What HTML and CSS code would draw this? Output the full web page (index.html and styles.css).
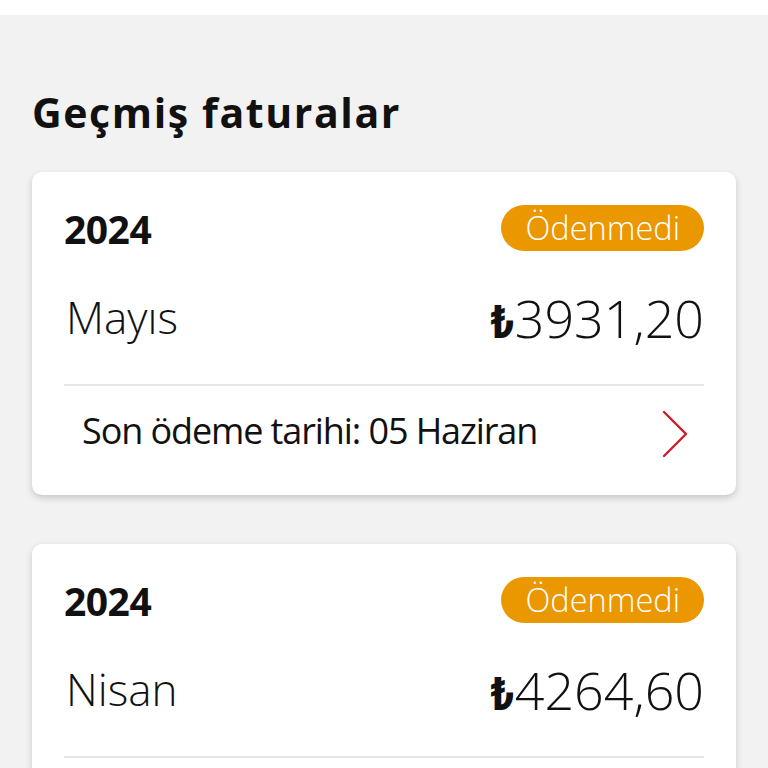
FILE: index.html
```html
<!DOCTYPE html>
<html lang="tr">
<head>
<meta charset="utf-8">
<title>Geçmiş faturalar</title>
<link rel="stylesheet" href="styles.css">
</head>
<body>
<div class="topbar"></div>
<main class="page">
  <h1 class="title">Geçmiş faturalar</h1>
  <section class="card">
    <div class="row head">
      <span class="year">2024</span>
      <span class="badge">Ödenmedi</span>
    </div>
    <div class="row amount-row">
      <span class="month">Mayıs</span>
      <span class="amount"><b class="lira">₺</b>3931,20</span>
    </div>
    <div class="divider"></div>
    <div class="row due">
      <span class="due-text">Son ödeme tarihi: 05 Haziran</span>
      <svg class="chev" width="30" height="48" viewBox="0 0 30 48"><path d="M4 2 L26 24 L4 46" fill="none" stroke="#d11a2a" stroke-width="2.4" stroke-linecap="round" stroke-linejoin="round"/></svg>
    </div>
  </section>
  <section class="card">
    <div class="row head">
      <span class="year">2024</span>
      <span class="badge">Ödenmedi</span>
    </div>
    <div class="row amount-row">
      <span class="month">Nisan</span>
      <span class="amount"><b class="lira">₺</b>4264,60</span>
    </div>
    <div class="divider"></div>
    <div class="row due">
      <span class="due-text">Son ödeme tarihi: 05 Mayıs</span>
      <svg class="chev" width="30" height="48" viewBox="0 0 30 48"><path d="M4 2 L26 24 L4 46" fill="none" stroke="#d11a2a" stroke-width="2.4" stroke-linecap="round" stroke-linejoin="round"/></svg>
    </div>
  </section>
</main>
</body>
</html>
```

FILE: styles.css
```css
html, body {
  margin: 0;
  padding: 0;
  background: #f2f2f2;
  font-family: "Open Sans", Roboto, sans-serif;
  color: #111;
  overflow: hidden;
  height: 768px;
}
.topbar {
  height: 15px;
  background: #fff;
}
.page {
  padding: 0 32px;
}
.title {
  margin: 0;
  padding-top: 71px;
  font-size: 41px;
  font-weight: 700;
  line-height: 52px;
  letter-spacing: 1.6px;
  color: #111;
}
.card {
  margin-top: 34px;
  background: #fff;
  border-radius: 10px;
  box-shadow: 0 3px 7px rgba(0,0,0,0.18);
  padding: 33px 32px 0 32px;
  height: 290px;
}
.card + .card {
  margin-top: 49px;
}
.row {
  display: flex;
  align-items: center;
  justify-content: space-between;
}
.head {
  height: 46px;
}
.year {
  font-size: 39px;
  font-weight: 700;
  letter-spacing: -0.5px;
}
.badge {
  background: #eb9700;
  color: #fff;
  font-size: 32.5px;
  font-weight: 300;
  height: 46px;
  line-height: 46px;
  padding: 0 24px 0 25px;
  border-radius: 23px;
}
.amount-row {
  margin-top: 41px;
  height: 50px;
}
.month {
  font-size: 44px;
  font-weight: 300;
  padding-left: 2px;
}
.amount {
  font-size: 52px;
  font-weight: 300;
  font-stretch: 90%;
}
.lira {
  font-weight: 700;
  font-size: 46px;
  font-stretch: 80%;
}
.divider {
  margin-top: 42px;
  height: 2px;
  background: #e6e6e6;
}
.due {
  height: 96px;
  padding-left: 18px;
  padding-right: 14px;
}
.due-text {
  font-size: 36px;
  font-weight: 400;
  letter-spacing: -1.1px;
  margin-bottom: 8px;
}
.chev {
  display: block;
}
```
